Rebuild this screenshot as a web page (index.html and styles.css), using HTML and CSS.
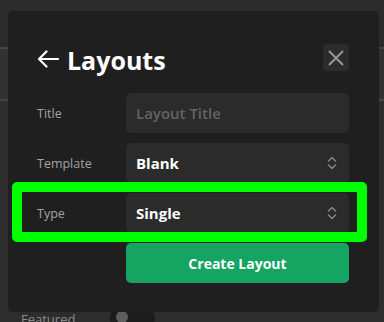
FILE: index.html
```html
<!DOCTYPE html>
<html lang="en">
<head>
  <meta charset="UTF-8" />
  <meta name="viewport" content="width=device-width, initial-scale=1.0" />
  <title>Layouts</title>
  <link rel="stylesheet" href="styles.css">
</head>
<body>
  <!-- page behind the dialog -->
  <div class="page">
    <div class="page-top"></div>
    <div class="page-band"></div>
    <div class="page-body"></div>
    <div class="page-field">
      <span class="field-label">Featured</span>
      <span class="toggle"><span class="knob"></span></span>
    </div>
  </div>

  <div class="modal">
    <div class="modal-head">
      <h1 class="modal-title">
        <svg class="back" width="22" height="18" viewBox="0 0 22 18" aria-hidden="true">
          <path d="M21 9H2M9.5 1.5L2 9l7.5 7.5" fill="none" stroke="#fff" stroke-width="2.2" stroke-linecap="round" stroke-linejoin="round"/>
        </svg>
        Layouts
      </h1>
      <button class="close" aria-label="Close">
        <svg width="16" height="16" viewBox="0 0 16 16" aria-hidden="true">
          <path d="M1.5 1.5l13 13M14.5 1.5l-13 13" fill="none" stroke="#9a9a9a" stroke-width="1.8" stroke-linecap="round"/>
        </svg>
      </button>
    </div>

    <div class="form">
      <label class="row">
        <span class="label">Title</span>
        <input class="field" type="text" placeholder="Layout Title" />
      </label>
      <div class="row">
        <span class="label">Template</span>
        <div class="field select">
          <span>Blank</span>
          <svg class="chev" width="10" height="14" viewBox="0 0 10 14" aria-hidden="true">
            <path d="M1.5 5L5 1.5 8.5 5M1.5 9L5 12.5 8.5 9" fill="none" stroke="#8a8a8a" stroke-width="1.4" stroke-linecap="round" stroke-linejoin="round"/>
          </svg>
        </div>
      </div>
      <div class="row">
        <span class="label">Type</span>
        <div class="field select">
          <span>Single</span>
          <svg class="chev" width="10" height="14" viewBox="0 0 10 14" aria-hidden="true">
            <path d="M1.5 5L5 1.5 8.5 5M1.5 9L5 12.5 8.5 9" fill="none" stroke="#8a8a8a" stroke-width="1.4" stroke-linecap="round" stroke-linejoin="round"/>
          </svg>
        </div>
      </div>
      <div class="row">
        <span class="label"></span>
        <button class="create">Create Layout</button>
      </div>
    </div>
  </div>

  <div class="highlight"></div>
</body>
</html>
```

FILE: styles.css
```css
* {
  box-sizing: border-box;
}
body {
  margin: 0;
  width: 384px;
  height: 322px;
  overflow: hidden;
  background: #2b2b2b;
  font-family: "Open Sans", "Noto Sans", sans-serif;
  position: relative;
}

/* background page */
.page-top {
  height: 47px;
  background: #2b2b2b;
}
.page-band {
  height: 54px;
  background: #323232;
  border-top: 2px solid #454545;
  border-bottom: 2px solid #454545;
}
.page-body {
  height: 205px;
  background: #2d2d2d;
}
.page-field {
  display: flex;
  align-items: flex-start;
  padding-left: 21px;
  height: 16px;
  background: #2d2d2d;
}
.field-label {
  color: #8c8c8c;
  font-size: 13px;
  line-height: 18px;
  margin-top: 4px;
  width: 89px;
}
.toggle {
  width: 45px;
  height: 22px;
  border-radius: 11px;
  background: #1c1c1c;
  margin-top: 1px;
  padding: 4px 0 0 6px;
}
.knob {
  display: block;
  width: 12px;
  height: 12px;
  border-radius: 50%;
  background: #5e5e5e;
}

/* dialog */
.modal {
  position: absolute;
  left: 8px;
  top: 11px;
  width: 371px;
  height: 301px;
  background: #1f1f1f;
  border-radius: 5px;
  padding: 33px 30px 0 29px;
}
.modal-head {
  display: flex;
  align-items: center;
  justify-content: space-between;
  height: 27px;
}
.modal-title {
  margin: 0;
  display: flex;
  align-items: center;
  gap: 8px;
  color: #fff;
  font-size: 25px;
  font-weight: 700;
  line-height: 30px;
  margin-top: 4px;
}
.back {
  margin-top: -2px;
}
.close {
  width: 26px;
  height: 27px;
  border: none;
  border-radius: 4px;
  background: #2c2c2c;
  display: flex;
  align-items: center;
  justify-content: center;
  padding: 0;
}

.form {
  margin-top: 22px;
  display: flex;
  flex-direction: column;
  gap: 10px;
}
.row {
  display: flex;
  align-items: center;
}
.label {
  width: 89px;
  color: #a3a3a3;
  font-size: 12.5px;
}
.field {
  width: 223px;
  height: 40px;
  border: none;
  border-radius: 5px;
  background: #2b2b2b;
  padding: 0 10px;
  color: #fff;
  font-family: inherit;
  font-size: 15px;
  font-weight: 700;
  outline: none;
}
.field::placeholder {
  color: #636363;
  font-weight: 600;
}
.select {
  display: flex;
  align-items: center;
  justify-content: space-between;
  padding-right: 12px;
}
.create {
  width: 223px;
  height: 40px;
  border: none;
  border-radius: 5px;
  background: #16a462;
  color: #fff;
  font-family: inherit;
  font-size: 14px;
  font-weight: 700;
}

/* annotation box drawn over the Type row */
.highlight {
  position: absolute;
  left: 12px;
  top: 182px;
  width: 355px;
  height: 60px;
  border: 10px solid #00ff00;
  border-radius: 5px;
}
```
